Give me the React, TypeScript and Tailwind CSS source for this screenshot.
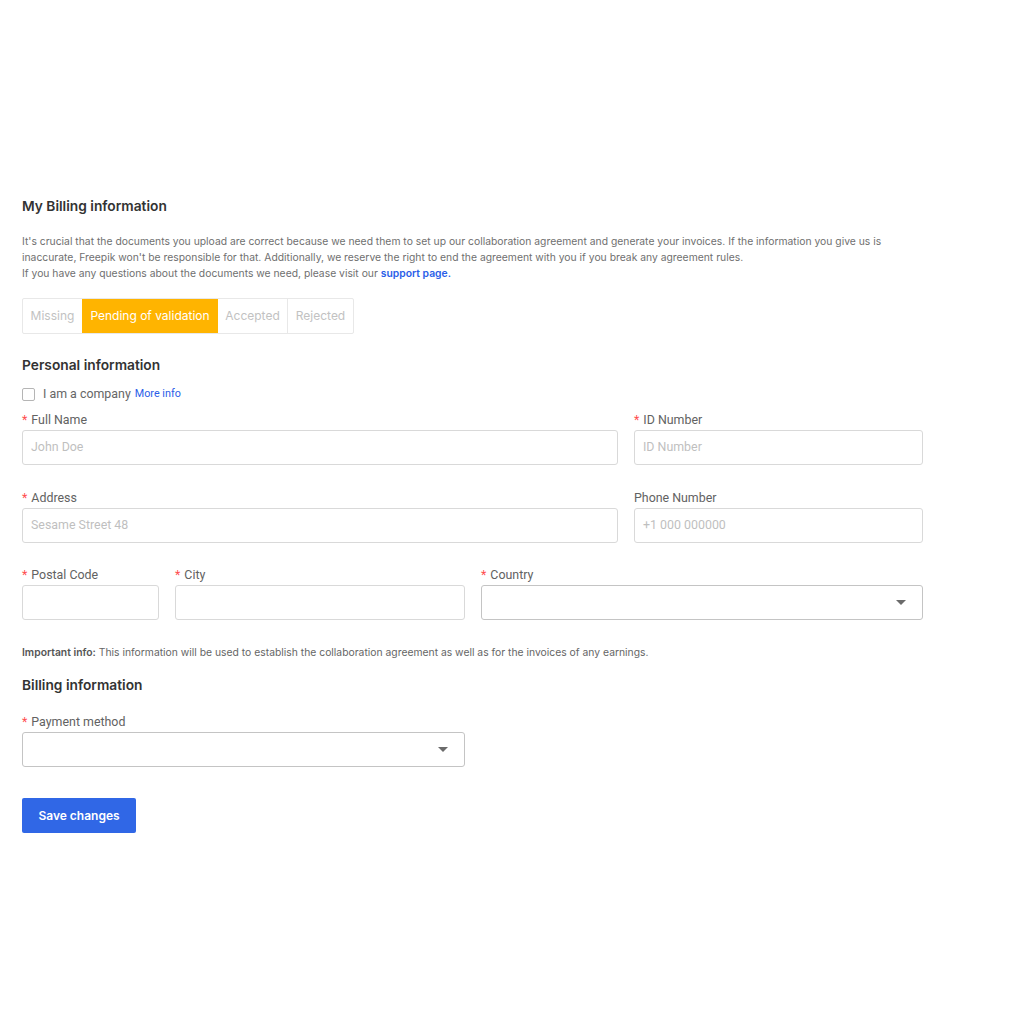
import React from "react";

const inter = { fontFamily: "Inter, 'Noto Sans', sans-serif" };
const roboto = { fontFamily: "Roboto, 'Liberation Sans', sans-serif" };

function Label({ text, required = true }: { text: string; required?: boolean }) {
  return (
    <div className="h-[20px] text-[12.4px] leading-[20px] text-[#626262]" style={roboto}>
      {required && <span className="text-[#ff4d4f] mr-[4px]">*</span>}
      {text}
    </div>
  );
}

function Input({ placeholder = "" }: { placeholder?: string }) {
  return (
    <div
      className="h-[35px] w-full rounded-[3px] border border-[#d9d9d9] px-[8px] flex items-center text-[12.4px] text-[#bfbfbf]"
      style={roboto}
    >
      {placeholder}
    </div>
  );
}

function Select() {
  return (
    <div className="h-[35px] w-full rounded-[3px] border border-[#c4c4c4] flex items-center justify-end pr-[16px]">
      <svg width="10" height="6" viewBox="0 0 10 6">
        <path d="M0 0 L10 0 L5 5 Z" fill="#6b6b6b" />
      </svg>
    </div>
  );
}

export default function App() {
  return (
    <div className="bg-white min-h-[1024px] w-[1024px] pl-[22px] pt-[197px]" style={inter}>
      <div className="w-[901px]">
        <h1 className="text-[13.75px] font-semibold text-[#333] leading-[18px]">My Billing information</h1>
        <div className="mt-[18px] text-[10.35px] leading-[16px] text-[#707070]">
          <p>
            It's crucial that the documents you upload are correct because we need them to set up our collaboration
            agreement and generate your invoices. If the information you give us is inaccurate, Freepik won't be
            responsible for that. Additionally, we reserve the right to end the agreement with you if you break any
            agreement rules.
          </p>
          <p>
            If you have any questions about the documents we need, please visit our{" "}
            <span className="text-[#2a5ee8] font-semibold">support page.</span>
          </p>
        </div>

        <div className="mt-[17px] flex h-[36px] w-fit border border-[#e8e8e8] rounded-[2px] text-[12px] text-[#c2c2c2]">
          <div className="w-[59px] flex items-center justify-center">Missing</div>
          <div className="w-[136px] flex items-center justify-center bg-[#ffb400] text-white">Pending of validation</div>
          <div className="w-[70px] flex items-center justify-center border-r border-[#e8e8e8]">Accepted</div>
          <div className="w-[65px] flex items-center justify-center">Rejected</div>
        </div>

        <h2 className="mt-[22px] text-[13.75px] font-semibold text-[#333] leading-[18px]">Personal information</h2>

        <div className="mt-[12px] flex items-center h-[16px]">
          <div className="w-[13px] h-[13px] border border-[#b5b5b5] rounded-[2px]" />
          <span className="ml-[8px] text-[12.4px] text-[#666]" style={roboto}>I am a company</span>
          <span className="ml-[4px] text-[10.8px] text-[#2a5ee8]" style={roboto}>More info</span>
        </div>

        <div className="mt-[8px] flex gap-[16px]">
          <div className="w-[596px]">
            <Label text="Full Name" />
            <Input placeholder="John Doe" />
          </div>
          <div className="w-[289px]">
            <Label text="ID Number" />
            <Input placeholder="ID Number" />
          </div>
        </div>

        <div className="mt-[23px] flex gap-[16px]">
          <div className="w-[596px]">
            <Label text="Address" />
            <Input placeholder="Sesame Street 48" />
          </div>
          <div className="w-[289px]">
            <Label text="Phone Number" required={false} />
            <Input placeholder="+1 000 000000" />
          </div>
        </div>

        <div className="mt-[22px] flex gap-[16px]">
          <div className="w-[137px]">
            <Label text="Postal Code" />
            <Input />
          </div>
          <div className="w-[290px]">
            <Label text="City" />
            <Input />
          </div>
          <div className="w-[442px]">
            <Label text="Country" />
            <Select />
          </div>
        </div>

        <p className="mt-[24px] text-[10.35px] leading-[16px] text-[#666]">
          <span className="font-semibold text-[#555]">Important info:</span> This information will be used to establish
          the collaboration agreement as well as for the invoices of any earnings.
        </p>

        <h2 className="mt-[16px] text-[13.75px] font-semibold text-[#333] leading-[18px]">Billing information</h2>

        <div className="mt-[18px] w-[443px]">
          <Label text="Payment method" />
          <Select />
        </div>

        <button
          className="mt-[31px] h-[35px] w-[114px] rounded-[2px] bg-[#3067e6] text-white text-[12px] font-semibold"
          style={inter}
        >
          Save changes
        </button>
      </div>
    </div>
  );
}
